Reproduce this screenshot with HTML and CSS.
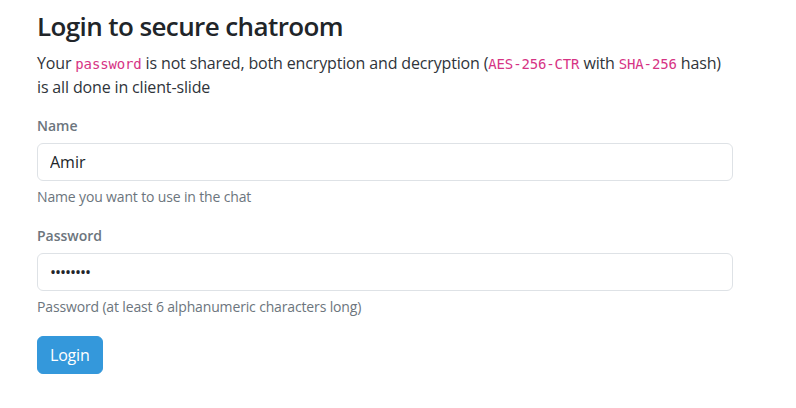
FILE: index.html
```html
<!DOCTYPE html>
<html lang="en">
<head>
<meta charset="utf-8">
<title>Login to secure chatroom</title>
<link rel="stylesheet" href="styles.css">
</head>
<body>
<main class="container">
  <h3 class="title">Login to secure chatroom</h3>
  <p class="intro"><span>Your</span> <code>password</code> <span>is not shared, both encryption and decryption (</span><code>AES-256-CTR</code> <span>with</span> <code>SHA-256</code> <span>hash)</span> <span>is all done in client-slide</span></p>
  <form class="login-form">
    <div class="field">
      <label class="field-label" for="name">Name</label>
      <input class="field-input" id="name" type="text" value="Amir">
      <div class="field-help">Name you want to use in the chat</div>
    </div>
    <div class="field">
      <label class="field-label" for="password">Password</label>
      <input class="field-input field-password" id="password" type="password" value="password">
      <div class="field-help">Password (at least 6 alphanumeric characters long)</div>
    </div>
    <button class="btn-login" type="button">Login</button>
  </form>
</main>
</body>
</html>
```
FILE: styles.css
```css
* { box-sizing: border-box; }
html, body { margin: 0; padding: 0; background: #fff; }
body {
  font-family: "Open Sans", "Noto Sans", sans-serif;
  color: #2f343a;
  font-size: 16px;
  line-height: 24px;
}
.container {
  width: 696px;
  margin-left: 37px;
  padding-top: 9px;
}
.title {
  font-size: 26px;
  font-weight: 600;
  line-height: 34px;
  letter-spacing: -0.6px;
  color: #212529;
  margin: 0 0 8px;
}
.intro {
  margin: 0 0 16px;
  letter-spacing: -0.15px;
}
code {
  font-family: "DejaVu Sans Mono", monospace;
  font-size: 14px;
  line-height: 1;
  color: #d63384;
}
.field { margin-bottom: 18px; }
.field-label {
  display: block;
  font-size: 14px;
  font-weight: 600;
  line-height: 21px;
  color: #6c757d;
  margin-bottom: 7px;
}
.field-input {
  display: block;
  width: 100%;
  height: 38px;
  padding: 6px 12px;
  font: inherit;
  font-size: 16px;
  color: #212529;
  background: #fff;
  border: 1px solid #dee2e6;
  border-radius: 6px;
  outline: none;
}
.field-password { letter-spacing: -1px; }
.field-help {
  margin-top: 5px;
  font-size: 14px;
  line-height: 21px;
  letter-spacing: -0.15px;
  color: #6c757d;
}
.btn-login {
  display: inline-block;
  height: 38px;
  margin-top: 1px;
  padding: 6px 12px;
  font: inherit;
  font-size: 16px;
  letter-spacing: -0.2px;
  color: #fff;
  background: #3498db;
  border: 1px solid #3498db;
  border-radius: 6px;
  cursor: pointer;
}
```
